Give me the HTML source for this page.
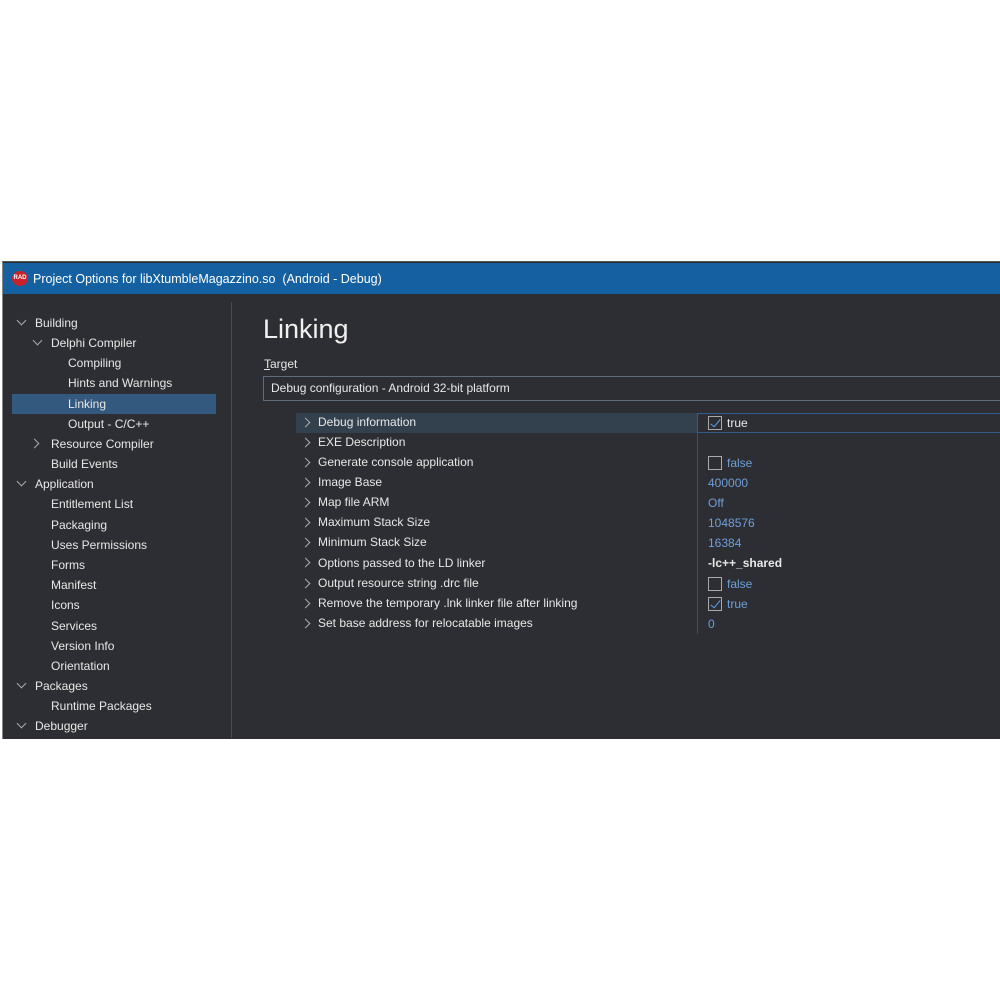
<!DOCTYPE html>
<html><head><style>
*{margin:0;padding:0;box-sizing:border-box}
body{width:1000px;height:1000px;background:#fff;position:relative;overflow:hidden;font-family:"Liberation Sans",sans-serif;font-size:12px;color:#e8e8e8}
#win{position:absolute;left:2px;top:261px;width:998px;height:478px;background:#2d2e33;border-left:1px solid #888;border-top:1px solid #555;overflow:hidden}
#title{position:absolute;left:0;top:1px;width:100%;height:31px;background:#1560a0;color:#fff;font-size:12.5px}
#title span{position:absolute;left:30px;top:9px}
#logo{position:absolute;left:9px;top:8px;width:16px;height:15px;border-radius:50%;background:#c8232c;font-size:6px;font-weight:bold;color:#fff;text-align:center;line-height:15px}
#div{position:absolute;left:228px;top:40px;width:1px;height:436px;background:#4a4c52}
.t{position:absolute;height:20px;line-height:20px;white-space:nowrap}
.sel{position:absolute;left:9px;top:132px;width:204px;height:20px;background:#33597f}
.ch{position:absolute;width:7px;height:7px;border-right:1px solid #aaa;border-bottom:1px solid #aaa}
.dn{transform:rotate(45deg)}
.rt{transform:rotate(-45deg)}
.v{color:#6f9fd6}
.cb{display:inline-block;width:14px;height:14px;border:1px solid #aaa;vertical-align:-3px;margin-right:5px;position:relative}
.cb.k::after{content:"";position:absolute;left:4px;top:0px;width:4px;height:9px;border-right:1.5px solid #5aa0e6;border-bottom:1.5px solid #5aa0e6;transform:rotate(40deg)}
</style></head><body>
<div id="win">
<div id="title"><div id="logo">RAD</div><span>Project Options for libXtumbleMagazzino.so&nbsp; (Android - Debug)</span></div>
<div id="div"></div>
<div class="sel"></div>
<div class="ch dn" style="left:15px;top:55px"></div><div class="t" style="left:32px;top:51px">Building</div>
<div class="ch dn" style="left:31px;top:75px"></div><div class="t" style="left:48px;top:71px">Delphi Compiler</div>
<div class="t" style="left:65px;top:91px">Compiling</div>
<div class="t" style="left:65px;top:111px">Hints and Warnings</div>
<div class="t" style="left:65px;top:132px">Linking</div>
<div class="t" style="left:65px;top:152px">Output - C/C++</div>
<div class="ch rt" style="left:28px;top:178px"></div><div class="t" style="left:48px;top:172px">Resource Compiler</div>
<div class="t" style="left:48px;top:192px">Build Events</div>
<div class="ch dn" style="left:15px;top:216px"></div><div class="t" style="left:32px;top:212px">Application</div>
<div class="t" style="left:48px;top:232px">Entitlement List</div>
<div class="t" style="left:48px;top:253px">Packaging</div>
<div class="t" style="left:48px;top:273px">Uses Permissions</div>
<div class="t" style="left:48px;top:293px">Forms</div>
<div class="t" style="left:48px;top:313px">Manifest</div>
<div class="t" style="left:48px;top:333px">Icons</div>
<div class="t" style="left:48px;top:354px">Services</div>
<div class="t" style="left:48px;top:374px">Version Info</div>
<div class="t" style="left:48px;top:394px">Orientation</div>
<div class="ch dn" style="left:15px;top:418px"></div><div class="t" style="left:32px;top:414px">Packages</div>
<div class="t" style="left:48px;top:434px">Runtime Packages</div>
<div class="ch dn" style="left:15px;top:458px"></div><div class="t" style="left:32px;top:454px">Debugger</div>

<div class="t" style="left:260px;top:50px;font-size:27px;height:34px;line-height:34px;color:#f0f0f0">Linking</div>
<div class="t" style="left:261px;top:92px"><u>T</u>arget</div>
<div style="position:absolute;left:260px;top:114px;width:740px;height:25px;border:1px solid #5d6b7a"><div class="t" style="left:7px;top:1px">Debug configuration - Android 32-bit platform</div></div>

<div style="position:absolute;left:293px;top:151px;width:402px;height:20px;background:#33414f"></div>
<div style="position:absolute;left:694px;top:151px;width:304px;height:20px;border:1px solid #2f5d8a;border-right:none"></div>
<div style="position:absolute;left:694px;top:171px;width:1px;height:201px;background:#4a4c52"></div>
</div>
<div style="position:absolute;left:2px;top:262px">
<div class="ch rt" style="left:300px;top:157px"></div><div class="t" style="left:316px;top:150px">Debug information</div>
<div class="ch rt" style="left:300px;top:177px"></div><div class="t" style="left:316px;top:170px">EXE Description</div>
<div class="ch rt" style="left:300px;top:197px"></div><div class="t" style="left:316px;top:190px">Generate console application</div>
<div class="ch rt" style="left:300px;top:217px"></div><div class="t" style="left:316px;top:210px">Image Base</div>
<div class="ch rt" style="left:300px;top:237px"></div><div class="t" style="left:316px;top:230px">Map file ARM</div>
<div class="ch rt" style="left:300px;top:257px"></div><div class="t" style="left:316px;top:250px">Maximum Stack Size</div>
<div class="ch rt" style="left:300px;top:277px"></div><div class="t" style="left:316px;top:270px">Minimum Stack Size</div>
<div class="ch rt" style="left:300px;top:297px"></div><div class="t" style="left:316px;top:291px">Options passed to the LD linker</div>
<div class="ch rt" style="left:300px;top:318px"></div><div class="t" style="left:316px;top:311px">Output resource string .drc file</div>
<div class="ch rt" style="left:300px;top:338px"></div><div class="t" style="left:316px;top:331px">Remove the temporary .lnk linker file after linking</div>
<div class="ch rt" style="left:300px;top:358px"></div><div class="t" style="left:316px;top:351px">Set base address for relocatable images</div>

<div class="t" style="left:706px;top:151px"><span class="cb k"></span>true</div>
<div class="t v" style="left:706px;top:191px"><span class="cb"></span>false</div>
<div class="t v" style="left:706px;top:211px">400000</div>
<div class="t v" style="left:706px;top:231px">Off</div>
<div class="t v" style="left:706px;top:251px">1048576</div>
<div class="t v" style="left:706px;top:271px">16384</div>
<div class="t" style="left:706px;top:291px;font-weight:bold">-lc++_shared</div>
<div class="t v" style="left:706px;top:312px"><span class="cb"></span>false</div>
<div class="t v" style="left:706px;top:332px"><span class="cb k"></span>true</div>
<div class="t v" style="left:706px;top:352px">0</div>
</div>
</body></html>
